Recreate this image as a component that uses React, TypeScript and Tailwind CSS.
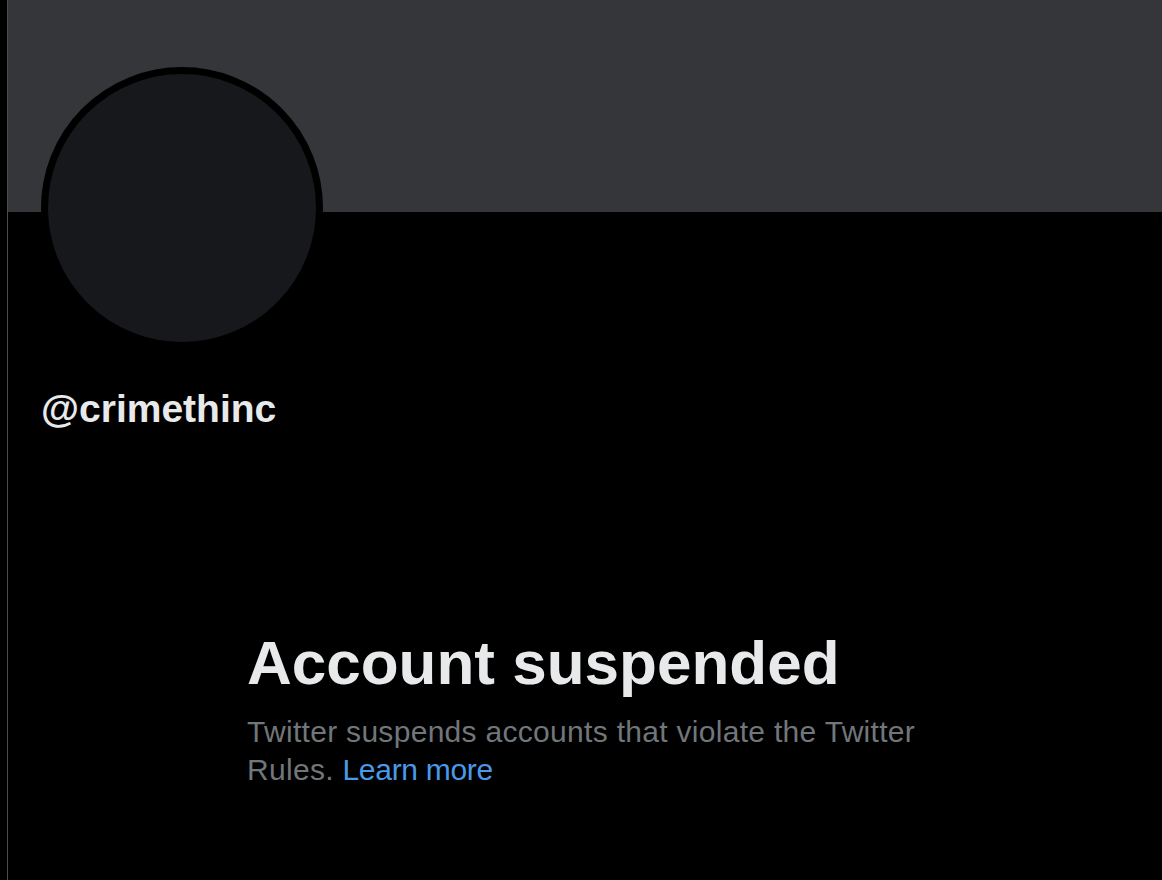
export default function App() {
  return (
    <div className="flex h-[880px] w-full overflow-hidden bg-black font-['Liberation_Sans',Arial,sans-serif]">
      <div className="w-[7px] shrink-0 bg-black" />
      <div className="w-px shrink-0 bg-[#4a4b4f]" />
      <main className="flex min-w-0 flex-1 flex-col">
        <div className="relative h-[212px] shrink-0 bg-[#35363a]">
          <div className="absolute left-[33px] top-[67px] h-[282px] w-[282px] rounded-full border-[7px] border-black bg-[#17181c]" />
        </div>
        <div className="mt-[174px] pl-[33px] text-[39px] font-bold leading-[1.2] text-[#e7e9ea]">
          @crimethinc
        </div>
        <section className="mt-[193px] pl-[239px]">
          <h1 className="text-[62px] font-bold leading-[1.2] text-[#e7e9ea]">
            Account suspended
          </h1>
          <p className="mt-[13px] w-[690px] text-[30px] leading-[38px] tracking-[0.3px] text-[#71767b]">
            Twitter suspends accounts that violate the Twitter Rules.{' '}
            <a href="#" className="tracking-[-0.3px] text-[#4a99e9]">
              Learn more
            </a>
          </p>
        </section>
      </main>
    </div>
  );
}
